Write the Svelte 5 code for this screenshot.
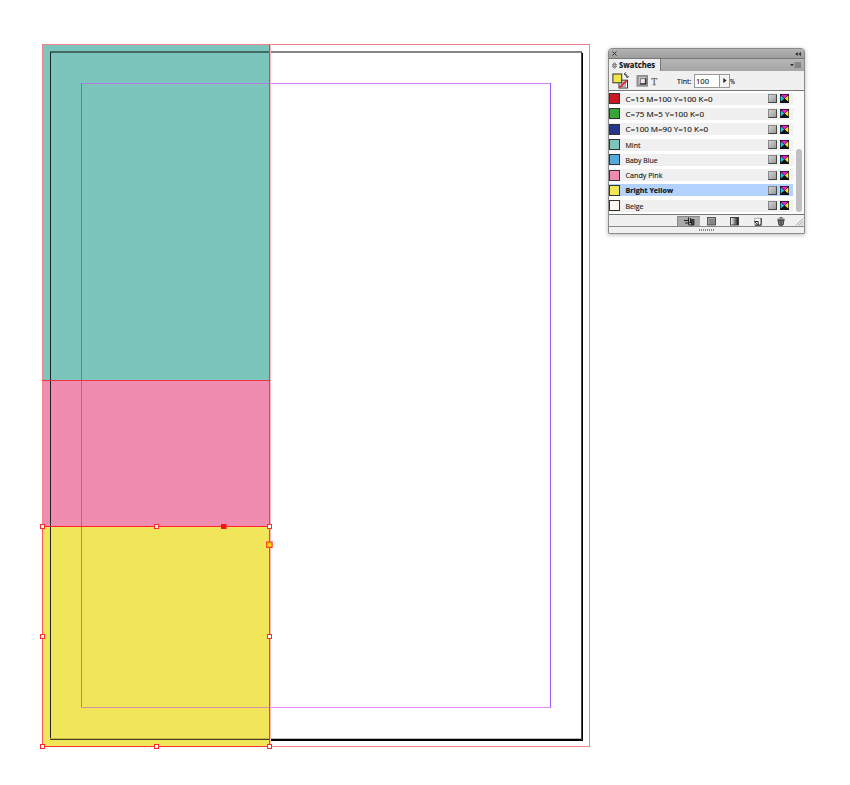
<script>
  const swatches = [
    { name: 'C=15 M=100 Y=100 K=0', color: '#cb1722', width: 87 },
    { name: 'C=75 M=5 Y=100 K=0', color: '#39a43a', width: 78.5 },
    { name: 'C=100 M=90 Y=10 K=0', color: '#24378a', width: 82.5 },
    { name: 'Mint', color: '#7cc6bc', width: 15 },
    { name: 'Baby Blue', color: '#57a9dc', width: 32 },
    { name: 'Candy Pink', color: '#f08cb2', width: 37 },
    { name: 'Bright Yellow', color: '#f1e65a', width: 47.5, selected: true },
    { name: 'Beige', color: '#fff9f2', width: 18 }
  ];
  const handles = [
    [42.5, 526.5], [156.5, 526.5], [269.5, 526.5],
    [42.5, 636.5], [269.5, 636.5],
    [42.5, 746.5], [156.5, 746.5], [269.5, 746.5]
  ];
</script>

<main>
  <svg class="artboard" width="600" height="785" viewBox="0 0 600 785">
    <rect x="42" y="44" width="228" height="336" fill="#7cc5bc" />
    <rect x="42" y="380" width="228" height="146" fill="#f08bb1" />
    <rect x="42" y="526" width="228" height="221" fill="#f1e65a" />
    <g shape-rendering="crispEdges">
      <rect x="42" y="44" width="547" height="1" fill="#f77f86" />
      <rect x="42" y="44" width="1" height="703" fill="#f28690" />
      <rect x="589" y="44" width="1" height="703" fill="#ff8088" />
      <rect x="270" y="746" width="320" height="1" fill="#ff8088" />
      <rect x="50" y="51" width="220" height="2" fill="#436a65" />
      <rect x="270" y="51" width="312" height="2" fill="#858585" />
      <rect x="50" y="52" width="1" height="688" fill="#1c2422" />
      <rect x="50" y="739" width="220" height="1" fill="#444019" />
      <rect x="50" y="738" width="220" height="1" fill="#c3ba49" />
      <rect x="270" y="738" width="312" height="1" fill="#bbb" />
      <rect x="270" y="739" width="313" height="2" fill="#000" />
      <rect x="581" y="52" width="1" height="688" fill="#444" />
      <rect x="582" y="53" width="1" height="688" fill="#000" />
      <rect x="81" y="83" width="189" height="1" fill="#b67ce0" />
      <rect x="270" y="83" width="281" height="1" fill="#cf83ff" />
      <rect x="81" y="83" width="1" height="297" fill="#7b68dc" />
      <rect x="81" y="380" width="1" height="146" fill="#b955d6" />
      <rect x="81" y="526" width="1" height="182" fill="#b37fa8" />
      <rect x="550" y="83" width="1" height="625" fill="#a45cff" />
      <rect x="81" y="707" width="189" height="1" fill="#dc90a8" />
      <rect x="270" y="707" width="281" height="1" fill="#e98aff" />
      <rect x="269" y="44" width="1" height="482" fill="#d64851" />
      <rect x="270" y="44" width="1" height="703" fill="#ffb6bd" />
      <rect x="42" y="380" width="228" height="1" fill="#ee3540" />
      <rect x="42" y="526" width="228" height="1" fill="#ff2529" />
      <rect x="42" y="526" width="1" height="221" fill="#ff5a5c" />
      <rect x="269" y="526" width="1" height="221" fill="#ff3a2c" />
      <rect x="42" y="746" width="228" height="1" fill="#ff3a2c" />
    </g>
    {#each handles as [x, y]}
      <rect x={x - 2} y={y - 2} width="4" height="4" fill="#fff" stroke="#ff2a2e" stroke-width="1" />
    {/each}
    <rect x="221" y="524" width="5.5" height="5" fill="#ff0f14" />
    <rect x="266.7" y="542" width="5.4" height="5.4" fill="#ffd900" stroke="#ff3a20" stroke-width="1.2" />
  </svg>

  <section class="panel">
    <header class="title">
      <svg width="5" height="5" viewBox="0 0 5 5"><path d="M.5 .5 4.5 4.5M4.5 .5 .5 4.5" stroke="#333" stroke-width="1" /></svg>
      <svg width="6" height="4" viewBox="0 0 6 4"><path d="M2.8 0V4L0 2ZM6 0V4L3.2 2Z" fill="#333" /></svg>
    </header>
    <div class="tabs">
      <div class="tab">
        <svg width="5" height="7" viewBox="0 0 5 7"><path d="M.5 2.8 2.5.6 4.5 2.8ZM.5 4.2 2.5 6.4 4.5 4.2Z" fill="none" stroke="#333" stroke-width=".7" /></svg>
        <svg width="38" height="12"><text x="0" y="8.8" textLength="36" lengthAdjust="spacingAndGlyphs" font-size="8" font-weight="700">Swatches</text></svg>
      </div>
      <svg class="menu" width="12" height="7" viewBox="0 0 12 7"><path d="M0 2H4L2 4.3Z" fill="#333" /><path d="M4.5 1H11M4.5 3H11M4.5 5H11" stroke="#555" stroke-width=".9" /></svg>
    </div>
    <div class="controls">
      <svg width="50" height="19" viewBox="0 -.6 50 19">
        <rect x="10" y="8.6" width="8.5" height="7.8" fill="#fff" stroke="#333" />
        <rect x="12.2" y="10.6" width="4" height="4" fill="#fff" stroke="#555" stroke-width=".8" />
        <path d="M10.6 15.8 17.8 9.1" stroke="#e2202a" stroke-width="1.8" />
        <rect x="3.9" y="2.4" width="8.8" height="8.8" fill="#f3e747" stroke="#333" />
        <path d="M15.5 2.4Q18.4 2.3 18.3 5.6M17 4.5 18.3 6.3 19.6 4.5M16.9 .8 15.1 2.4 16.9 4" fill="none" stroke="#222" stroke-width=".8" />
        <rect x="28" y="4" width="10.5" height="10.5" fill="#999" stroke="#888" />
        <rect x="31.3" y="7" width="5" height="5" fill="#e9e9e9" stroke="#777" />
        <path d="M31 12.4H36.8V6.8" fill="none" stroke="#222" stroke-width="1.1" />
        <path d="M30.3 12.5V6H36.5" fill="none" stroke="#ddd" stroke-width=".8" />
        <text x="42.2" y="13.3" font-size="9.5" class="serif">T</text>
      </svg>
      <svg class="tint-label" width="16" height="12"><text x="0" y="8.8" textLength="14.5" lengthAdjust="spacingAndGlyphs" font-size="7.5">Tint:</text></svg>
      <div class="field"><svg width="18" height="11"><text x="0" y="8.1" textLength="13" lengthAdjust="spacingAndGlyphs" font-size="7.5">100</text></svg></div>
      <div class="step"><svg width="4" height="5" viewBox="0 0 4 5"><path d="M.3 0 3.6 2.5 .3 5Z" fill="#222" /></svg></div>
      <svg width="7" height="12"><text x="0" y="9.1" textLength="5" lengthAdjust="spacingAndGlyphs" font-size="7.5">%</text></svg>
    </div>
    <div class="body">
      <ul>
        {#each swatches as s}
          <li>
            <div class="row" class:selected={s.selected}>
              <span class="chip" style:background={s.color}></span>
              <svg class="name" width="142" height="12">
                <text x="0.5" y="8.6" font-size="7.6" textLength={s.width} lengthAdjust="spacingAndGlyphs">{s.name}</text>
              </svg>
              <span class="gray"></span>
              <svg class="cmyk" width="9" height="9" viewBox="0 0 9 9">
                <rect width="9" height="9" fill="#111" />
                <path d="M1 .7H8L4.5 4.5Z" fill="#f01cd4" />
                <path d="M.7 1.4V7.6L4.2 4.5Z" fill="#13c9ef" />
                <path d="M8.3 1.4V7.6L4.8 4.5Z" fill="#f6e91b" />
              </svg>
            </div>
          </li>
        {/each}
      </ul>
      <div class="track"><div class="thumb"></div></div>
    </div>
    <footer>
      <svg width="195" height="11" viewBox="1 0 195 11">
        <rect x="69" y="0" width="23" height="11" fill="#aaa" />
        <path d="M69.5 11V.5H92" fill="none" stroke="#888" />
        <path d="M76 4.5H80M80.5 1.5V7.5M77 7H82M82.5 2V9" stroke="#222" />
        <path d="M80.5 6.5H84V9H80.5Z" fill="#999" stroke="#222" stroke-width=".8" />
        <path d="M83.5 3.5H86V9H83.5Z" fill="#444" stroke="#222" stroke-width=".8" />
        <rect x="99.5" y="1.5" width="8" height="7.5" fill="#888" stroke="#444" stroke-width=".9" />
        <path d="M100.3 8.5V2.3H107" fill="none" stroke="#bbb" stroke-width=".7" />
        <defs><linearGradient id="fade"><stop offset="0" stop-color="#fff" /><stop offset="1" stop-color="#111" /></linearGradient></defs>
        <rect x="122.5" y="1.5" width="8" height="7.5" fill="url(#fade)" stroke="#333" stroke-width=".9" />
        <path d="M146.5 2.2H153V9H146.5Z" fill="#f6f6f6" stroke="#999" stroke-width=".7" />
        <path d="M146.5 5.5H150.2V8.8M146.8 6 149.7 8.8M153.2 2V9.2H147" fill="none" stroke="#222" stroke-width="1" />
        <path d="M170.2 4.8 171 9.2H175L175.8 4.8Z" fill="#aaa" />
        <path d="M169.3 3.2H176.7M171.5 1.8H174.5M170.2 4.8 171 9.2H175L175.8 4.8M172.2 5V9M173.8 5V9M169.6 4.6H176.4" fill="none" stroke="#333" stroke-width=".95" />
        <path d="M188 9.5 195 2.5M190.6 9.5 195 5.1M193 9.5 195 7.5" stroke="#999" stroke-width=".9" />
      </svg>
    </footer>
    <div class="grip"><i></i></div>
  </section>
</main>

<style>
  :global(body) { margin: 0; background: #fff; }
  main { display: flex; width: 850px; height: 785px; overflow: hidden; font-family: "Open Sans", "Noto Sans", sans-serif; color: #222; }
  svg { display: block; flex: none; }
  text { fill: #111; stroke: #111; stroke-width: .12; }
  .serif { font-family: "Liberation Serif", serif; fill: #666; stroke: #666; stroke-width: .25; }
  .panel { box-sizing: border-box; width: 197px; height: 186px; margin: 48px 0 0 8px; display: flex; flex-direction: column; border: 1px solid #8a8a8a; border-radius: 4px 4px 1px 1px; background: #f0f0f0; box-shadow: 0 1px 4px rgba(0, 0, 0, .28); overflow: hidden; }
  .title { box-sizing: border-box; height: 9px; flex: none; display: flex; align-items: center; justify-content: space-between; padding: 0 3px 0 3px; background: linear-gradient(#b3b3b3, #9e9e9e); }
  .tabs { box-sizing: border-box; height: 13px; flex: none; display: flex; justify-content: space-between; background: linear-gradient(#b5b5b5, #a6a6a6); border-top: 1px solid #777; }
  .tab { box-sizing: border-box; width: 52px; display: flex; align-items: center; padding-left: 3px; gap: 2px; background: #efefef; border-right: 1px solid #777; }
  .menu { align-self: center; margin-right: 2px; }
  .controls { box-sizing: border-box; height: 20px; flex: none; display: flex; align-items: center; border-bottom: 1px solid #777; }
  .tint-label { margin-left: 17.5px; }
  .field { box-sizing: border-box; width: 26px; height: 14px; margin-left: 1.5px; border: 1px solid #999; background: #fff; padding: 1px 0 0 1px; }
  .step { box-sizing: border-box; width: 10px; height: 14px; border: 1px solid #999; border-left: 0; display: flex; align-items: center; justify-content: center; background: #f3f3f3; }
  .body { box-sizing: border-box; height: 124px; flex: none; display: flex; background: #fff; border-bottom: 1px solid #777; }
  ul { width: 184px; margin: 0; padding: 0; list-style: none; }
  li { height: 15.3px; padding-top: 1.7px; box-sizing: border-box; }
  .row { height: 12px; display: flex; align-items: center; background: #f0f0f0; }
  .selected { background: #b3d3fe; }
  .selected text { font-weight: 700; }
  .chip { box-sizing: border-box; width: 11px; height: 11px; border: 1px solid #333; flex: none; }
  .name { margin-left: 5px; }
  .gray { box-sizing: border-box; width: 9px; height: 9px; margin-left: 1px; background: linear-gradient(135deg, #d3d3d3, #999); border: 1px solid #444; border-top-color: #888; border-left-color: #888; }
  .cmyk { margin-left: 3px; }
  .track { flex: 1; display: flex; justify-content: center; background: #fafafa; padding-top: 58px; }
  .thumb { width: 6px; height: 63px; margin-left: 1px; background: #c1c1c1; border-radius: 3px; }
  footer { height: 12px; padding-top: 1px; box-sizing: border-box; flex: none; border-bottom: 1px solid #888; overflow: hidden; }
  .grip { flex: 1; display: flex; align-items: center; justify-content: center; }
  .grip i { width: 15px; height: 2px; background: repeating-linear-gradient(90deg, #888 0 1px, #eee 1px 2px); }
</style>
